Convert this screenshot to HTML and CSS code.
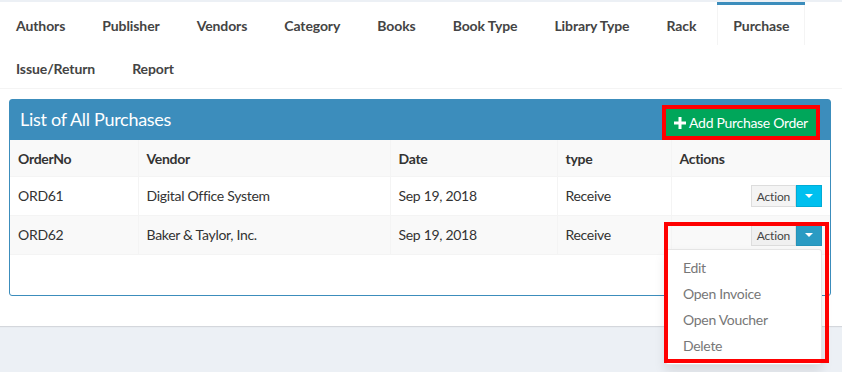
FILE: index.html
```html
<!DOCTYPE html>
<html lang="en">
<head>
    <meta charset="UTF-8">
    <meta name="viewport" content="width=device-width, initial-scale=1.0">
    <title>Library - Purchase</title>
    <link rel="stylesheet" href="styles.css">
</head>
<body>
    <div class="tabs-wrap">
        <!-- Module tabs -->
        <ul class="nav-tabs">
            <li><a href="#">Authors</a></li>
            <li><a href="#">Publisher</a></li>
            <li><a href="#">Vendors</a></li>
            <li><a href="#">Category</a></li>
            <li><a href="#">Books</a></li>
            <li><a href="#">Book Type</a></li>
            <li><a href="#">Library Type</a></li>
            <li><a href="#">Rack</a></li>
            <li class="active"><a href="#">Purchase</a></li>
            <li><a href="#">Issue/Return</a></li>
            <li><a href="#">Report</a></li>
        </ul>

        <div class="tab-content">
            <div class="box">
                <div class="box-header">
                    <h3 class="box-title">List of All Purchases</h3>
                    <button class="btn-add">
                        <svg class="plus-icon" viewBox="0 0 12 12" width="12" height="12">
                            <path d="M4.5 0h3v4.5H12v3H7.5V12h-3V7.5H0v-3h4.5z" fill="#fff"/>
                        </svg>
                        Add Purchase Order
                    </button>
                </div>

                <div class="box-body">
                    <table class="purchase-table">
                        <colgroup>
                            <col class="col-order">
                            <col class="col-vendor">
                            <col class="col-date">
                            <col class="col-type">
                            <col>
                        </colgroup>
                        <tr class="head-row">
                            <th>OrderNo</th>
                            <th>Vendor</th>
                            <th>Date</th>
                            <th>type</th>
                            <th>Actions</th>
                        </tr>
                        <tr>
                            <td>ORD61</td>
                            <td>Digital Office System</td>
                            <td>Sep 19, 2018</td>
                            <td>Receive</td>
                            <td class="actions">
                                <div class="btn-group">
                                    <button class="btn-action">Action</button>
                                    <button class="btn-caret"><span class="caret"></span></button>
                                </div>
                            </td>
                        </tr>
                        <tr>
                            <td>ORD62</td>
                            <td>Baker &amp; Taylor, Inc.</td>
                            <td>Sep 19, 2018</td>
                            <td>Receive</td>
                            <td class="actions">
                                <div class="btn-group open">
                                    <button class="btn-action">Action</button>
                                    <button class="btn-caret"><span class="caret"></span></button>
                                    <ul class="dropdown-menu">
                                        <li><a href="#">Edit</a></li>
                                        <li><a href="#">Open Invoice</a></li>
                                        <li><a href="#">Open Voucher</a></li>
                                        <li><a href="#">Delete</a></li>
                                    </ul>
                                </div>
                                <!-- highlight marker -->
                                <div class="highlight"></div>
                            </td>
                        </tr>
                    </table>
                </div>
            </div>
        </div>
    </div>
</body>
</html>
```

FILE: styles.css
```css
html {
    min-height: 100%;
}

body {
    margin: 0;
    min-height: 372px;
    overflow: visible;
    background-color: #ecf0f5;
    font-family: "Source Sans Pro", Lato, "Liberation Sans", sans-serif;
    font-size: 14px;
    letter-spacing: -0.3px;
    color: #333;
}

.tabs-wrap {
    margin-top: 2px;
    background: #fff;
    box-shadow: 0 1px 1px rgba(0, 0, 0, 0.1);
    padding-bottom: 30px;
}

.nav-tabs {
    list-style: none;
    margin: 0;
    padding: 0;
    display: flex;
    flex-wrap: wrap;
    border-bottom: 1px solid #f4f4f4;
}

.nav-tabs li {
    border-top: 3px solid transparent;
    margin-right: 5px;
}

.nav-tabs li a {
    display: block;
    padding: 1px 15px 0;
    line-height: 39px;
    border-left: 1px solid transparent;
    border-right: 1px solid transparent;
    color: #444;
    font-weight: bold;
    letter-spacing: -0.1px;
    text-decoration: none;
}

.nav-tabs li.active {
    border-top-color: #3c8dbc;
}

.nav-tabs li.active a {
    border-left-color: #f4f4f4;
    border-right-color: #f4f4f4;
}

.tab-content {
    padding: 10px 11px 0 9px;
}

.box {
    border: 1px solid #3c8dbc;
    border-radius: 3px;
    background: #fff;
}

.box-header {
    background: #3c8dbc;
    color: #fff;
    height: 40px;
    padding: 0 0 0 10px;
    display: flex;
    justify-content: space-between;
    align-items: center;
}

.box-title {
    margin: 0 0 2px;
    font-size: 18px;
    font-weight: normal;
}

.btn-add {
    align-self: flex-end;
    margin: 0 14px 4px 0;
    height: 27px;
    width: 150px;
    background: #00a65a;
    color: #fff;
    border: none;
    outline: 4px solid #f00;
    font-family: inherit;
    font-size: 14px;
    letter-spacing: -0.3px;
    display: flex;
    align-items: center;
    justify-content: center;
    gap: 3px;
    padding: 0;
}

.plus-icon {
    display: block;
}

.box-body {
    padding-bottom: 40px;
}

.purchase-table {
    width: 100%;
    border-collapse: collapse;
    table-layout: fixed;
}

.col-order { width: 128px; }
.col-vendor { width: 252px; }
.col-date { width: 167px; }
.col-type { width: 114px; }

.purchase-table th,
.purchase-table td {
    padding: 8px;
    line-height: 20px;
    text-align: left;
    border: 1px solid #f4f4f4;
    border-bottom: none;
}

.purchase-table th {
    padding-top: 9px;
    padding-bottom: 7px;
}

.purchase-table tr:first-child th {
    border-top: none;
}

.purchase-table th:first-child,
.purchase-table td:first-child {
    border-left: none;
}

.purchase-table th:last-child,
.purchase-table td:last-child {
    border-right: none;
}

.purchase-table tr:nth-child(odd) {
    background: #f9f9f9;
}

.purchase-table tr:last-child td {
    border-bottom: 1px solid #f4f4f4;
}

.actions {
    position: relative;
}

.btn-group {
    display: flex;
    justify-content: flex-end;
    position: relative;
}

.btn-action {
    height: 22px;
    padding: 0 5px;
    background: #f4f4f4;
    border: 1px solid #ddd;
    color: #444;
    font-family: inherit;
    font-size: 12px;
    letter-spacing: -0.2px;
}

.btn-caret {
    height: 22px;
    width: 26px;
    padding: 0;
    background: #00c0ef;
    border: 1px solid #00acd6;
    display: flex;
    align-items: center;
    justify-content: center;
}

.open .btn-caret {
    background: #2a9bc3;
    border-color: #2593b9;
}

.open .btn-action {
    background: #f0f0f0;
}

.caret {
    width: 0;
    height: 0;
    border-left: 4px solid transparent;
    border-right: 4px solid transparent;
    border-top: 4px solid #fff;
}

.dropdown-menu {
    position: absolute;
    top: 25px;
    right: 0;
    width: 155px;
    margin: 0;
    padding: 5px 0;
    list-style: none;
    background: #fff;
    border: 1px solid rgba(0, 0, 0, 0.1);
    border-radius: 3px;
    box-shadow: 0 6px 12px rgba(0, 0, 0, 0.1);
    z-index: 5;
}

.dropdown-menu li a {
    display: block;
    padding: 0 17px;
    line-height: 26px;
    color: #777;
    text-decoration: none;
}

.highlight {
    position: absolute;
    left: -8px;
    top: 6px;
    width: 165px;
    height: 141px;
    box-sizing: border-box;
    border: 4px solid #f00;
    z-index: 6;
    pointer-events: none;
}
```
